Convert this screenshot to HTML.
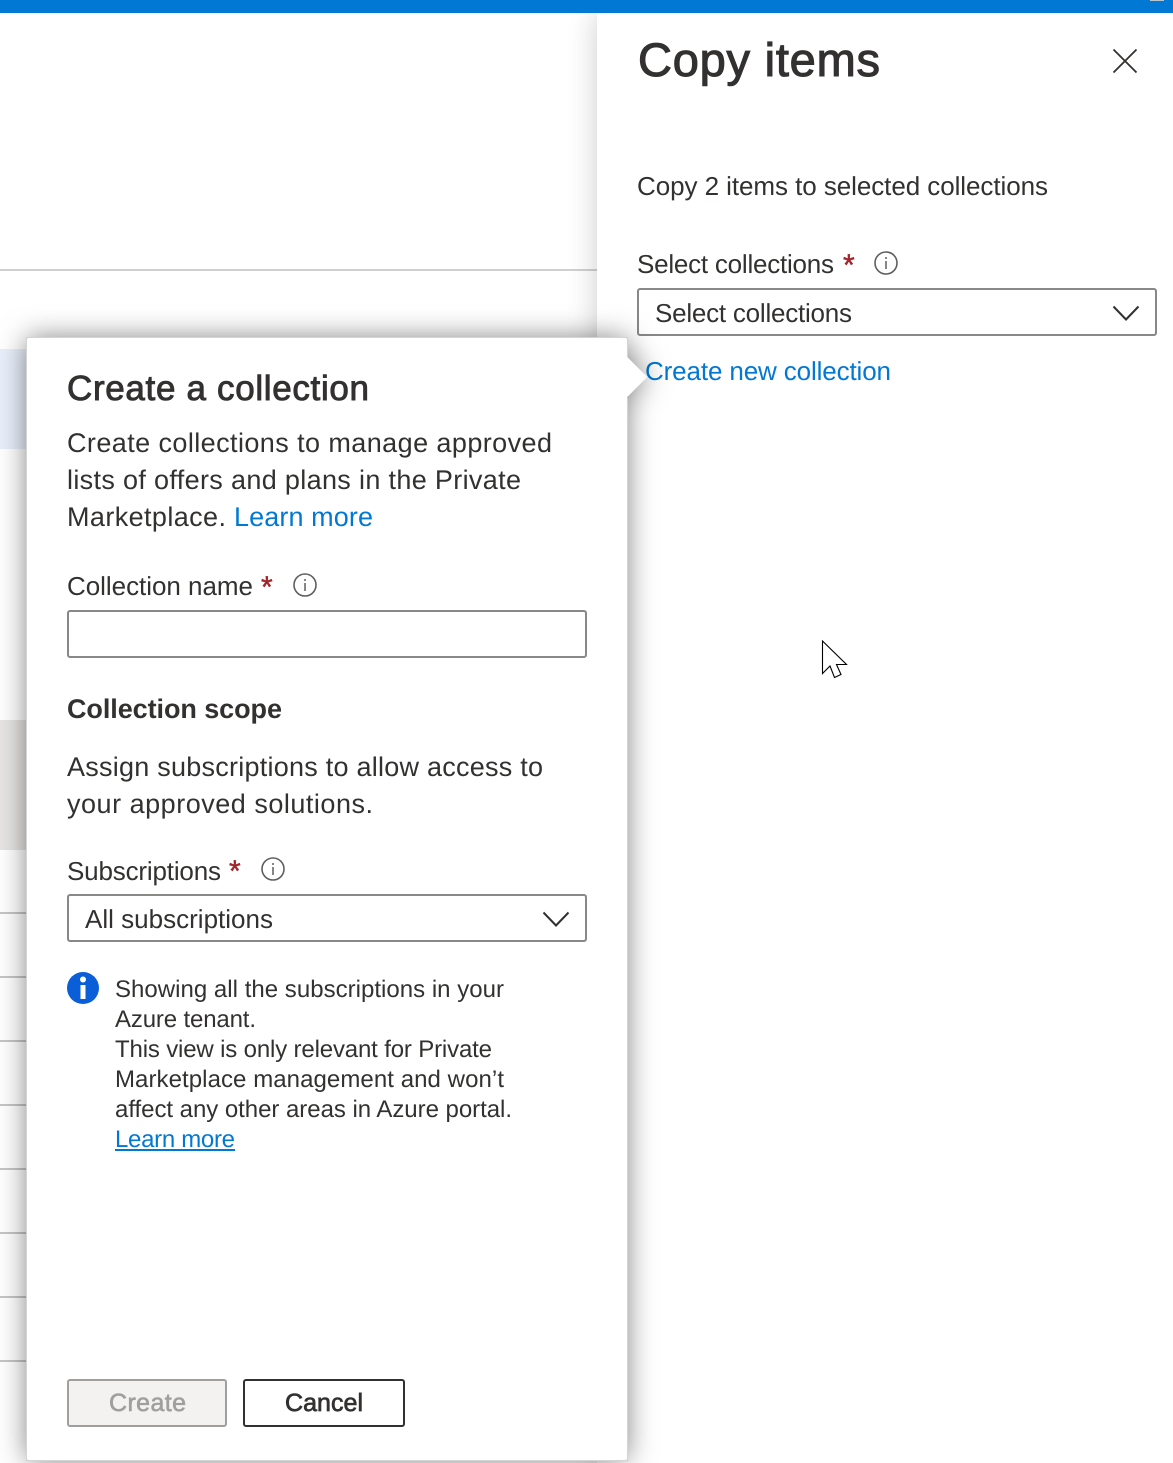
<!DOCTYPE html>
<html><head><meta charset="utf-8"><style>
html,body{margin:0;padding:0;background:#fff}
body{width:1173px;height:1463px;position:relative;overflow:hidden}
.a{position:absolute;box-sizing:border-box}
svg{position:absolute;left:0;top:0}
text{font-family:"Liberation Sans",sans-serif;fill:#323130;text-rendering:geometricPrecision}
.b{font-size:26px}.p{font-size:27px}.s{font-size:24px}.l{fill:#0078d4}
.sb{stroke:#323130;stroke-width:.7px}
.st{fill:#a4262c;stroke:#a4262c;stroke-width:.5px;font-size:30px}
.box{border:2px solid #8a8886;border-radius:3px;background:#fff}
</style></head><body>
<div class="a" style="left:0;top:0;width:1173px;height:13px;background:#0078d4;z-index:5"></div>
<div class="a" style="left:1150px;top:0;width:14px;height:1px;background:#b9c4cf;z-index:6"></div>
<div class="a" style="left:0;top:269px;width:597px;height:2px;background:#d2d0ce"></div>
<div class="a" style="left:0;top:349px;width:27px;height:100px;background:#e9effa"></div>
<div class="a" style="left:0;top:720px;width:27px;height:130px;background:#e6e5e4"></div>
<div class="a" style="left:0;top:912px;width:27px;height:2px;background:#c8c6c4"></div>
<div class="a" style="left:0;top:976px;width:27px;height:2px;background:#c8c6c4"></div>
<div class="a" style="left:0;top:1040px;width:27px;height:2px;background:#c8c6c4"></div>
<div class="a" style="left:0;top:1104px;width:27px;height:2px;background:#c8c6c4"></div>
<div class="a" style="left:0;top:1168px;width:27px;height:2px;background:#c8c6c4"></div>
<div class="a" style="left:0;top:1232px;width:27px;height:2px;background:#c8c6c4"></div>
<div class="a" style="left:0;top:1296px;width:27px;height:2px;background:#c8c6c4"></div>
<div class="a" style="left:0;top:1360px;width:27px;height:2px;background:#c8c6c4"></div>
<div class="a" style="left:597px;top:13px;width:576px;height:1450px;background:#fff;box-shadow:0 0 28px rgba(0,0,0,.2)"></div>
<div class="a box" style="left:637px;top:288px;width:520px;height:48px"></div>

<svg width="1173" height="1463" style="z-index:1">
<path d="M1113.500 49.500L1136.500 72.500M1136.500 49.500L1113.500 72.500" stroke="#323130" stroke-width="1.800" fill="none"/>
<path d="M1113.500 306.500L1126 319.500L1138.500 306.500" stroke="#323130" stroke-width="2" fill="none"/>
<circle cx="886" cy="263" r="11" fill="none" stroke="#605e5c" stroke-width="1.600"/>
<path d="M886 261v8M886 257v2" stroke="#605e5c" stroke-width="1.500"/>
<path d="M822.500 641L846.500 664.500H836.500L841 674.500L834.500 677.500L830 666L822.500 673.500Z" fill="#fff" stroke="#000" stroke-width="1.100"/>
<text x="638" y="76" font-size="47" textLength="242" class="sb" style="stroke-width:1.100px">Copy items</text>
<text x="637" y="195" class="b" textLength="411">Copy 2 items to selected collections</text>
<text x="637" y="273" class="b" textLength="197">Select collections</text>
<text x="843" y="275" class="st">*</text>
<text x="655" y="322" class="b" textLength="197">Select collections</text>
<text x="645" y="380" class="b l" textLength="246">Create new collection</text>
</svg>

<div class="a" style="left:27px;top:338px;width:600px;height:1122px;filter:drop-shadow(0 0 14px rgba(0,0,0,.5));z-index:2">
<div class="a" style="left:0;top:0;width:600px;height:1122px;background:#fff;border-radius:2px"></div>
<div class="a" style="left:584px;top:24px;width:30px;height:30px;background:#fff;transform:rotate(45deg)"></div>
</div>
<div class="a" style="left:27px;top:338px;width:600px;height:1122px;box-shadow:0 0 0 1px #d4d4d4;z-index:2;clip-path:polygon(-2px -2px,602px -2px,602px 19px,598px 19px,598px 60px,602px 60px,602px 1126px,-2px 1126px)"></div>
<div class="a box" style="left:67px;top:610px;width:520px;height:48px;z-index:3"></div>
<div class="a box" style="left:67px;top:894px;width:520px;height:48px;z-index:3"></div>
<div class="a" style="left:67px;top:1379px;width:160px;height:48px;background:#f3f2f1;border:2px solid #a19f9d;border-radius:3px;z-index:3"></div>
<div class="a" style="left:243px;top:1379px;width:162px;height:48px;background:#fff;border:2px solid #323130;border-radius:3px;z-index:3"></div>

<svg width="1173" height="1463" style="z-index:4">
<text x="67" y="400" font-size="35" textLength="302" class="sb" style="stroke-width:.9px">Create a collection</text>
<text x="67" y="452" class="p" textLength="485">Create collections to manage approved</text>
<text x="67" y="489" class="p" textLength="454">lists of offers and plans in the Private</text>
<text x="67" y="526" class="p" textLength="159">Marketplace.</text>
<text x="234" y="526" class="p l" textLength="139">Learn more</text>
<text x="67" y="595" class="b" textLength="186">Collection name</text>
<text x="261" y="597" class="st">*</text>
<circle cx="305" cy="585" r="11" fill="none" stroke="#605e5c" stroke-width="1.600"/>
<path d="M305 583v8M305 579v2" stroke="#605e5c" stroke-width="1.500"/>
<text x="67" y="718" font-size="27" font-weight="700" textLength="215">Collection scope</text>
<text x="67" y="776" class="p" textLength="476">Assign subscriptions to allow access to</text>
<text x="67" y="813" class="p" textLength="306">your approved solutions.</text>
<text x="67" y="880" class="b" textLength="154">Subscriptions</text>
<text x="229" y="881" class="st">*</text>
<circle cx="273" cy="869" r="11" fill="none" stroke="#605e5c" stroke-width="1.600"/>
<path d="M273 867v8M273 863v2" stroke="#605e5c" stroke-width="1.500"/>
<text x="85" y="928" class="b" textLength="188">All subscriptions</text>
<path d="M543.500 912.500L556 925.500L568.500 912.500" stroke="#323130" stroke-width="2" fill="none"/>
<circle cx="83" cy="988" r="16" fill="#0a5fd9"/>
<rect x="80.500" y="985" width="5" height="14" fill="#fff"/>
<circle cx="83" cy="979.500" r="3" fill="#fff"/>
<text x="115" y="997" class="s" textLength="389">Showing all the subscriptions in your</text>
<text x="115" y="1027" class="s" textLength="141">Azure tenant.</text>
<text x="115" y="1057" class="s" textLength="377">This view is only relevant for Private</text>
<text x="115" y="1087" class="s" textLength="389">Marketplace management and won’t</text>
<text x="115" y="1117" class="s" textLength="397">affect any other areas in Azure portal.</text>
<text x="115" y="1147" class="s l" textLength="120">Learn more</text>
<rect x="115" y="1149" width="120" height="2" fill="#0078d4"/>
<text x="109" y="1411" font-size="25" textLength="77" style="fill:#a19f9d" stroke="#a19f9d" stroke-width=".6">Create</text>
<text x="285" y="1411" font-size="25" textLength="78" class="sb">Cancel</text>
</svg>
</body></html>
